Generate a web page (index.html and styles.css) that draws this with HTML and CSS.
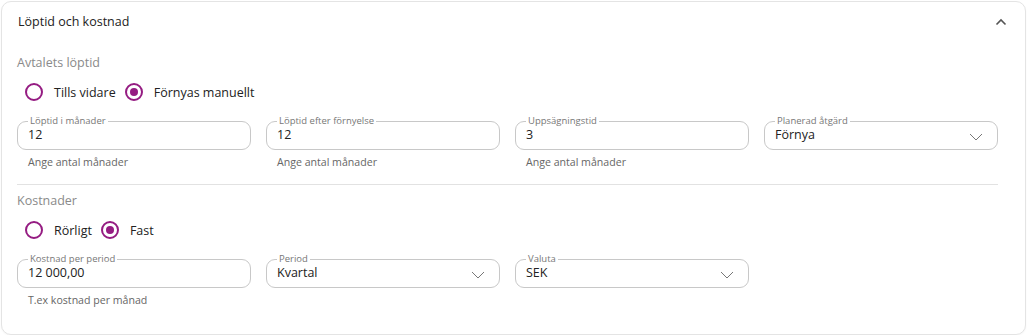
FILE: index.html
```html
<!DOCTYPE html>
<html lang="sv">
<head>
<meta charset="utf-8">
<title>Löptid och kostnad</title>
<link rel="stylesheet" href="styles.css">
</head>
<body>
<section class="card">
  <header class="card-header">
    <span class="card-title">Löptid och kostnad</span>
    <svg class="collapse-icon" width="12" height="8" viewBox="0 0 12 8"><path d="M1.5 6.5 L6 2 L10.5 6.5" fill="none" stroke="#555" stroke-width="1.6"/></svg>
  </header>
  <div class="card-body">
    <div class="group-title">Avtalets löptid</div>
    <div class="radio-row">
      <label class="radio"><span class="radio-dot"></span>Tills vidare</label>
      <label class="radio"><span class="radio-dot checked"></span>Förnyas manuellt</label>
    </div>
    <div class="field-grid">
      <div class="field">
        <fieldset class="outline"><legend>Löptid i månader</legend><div class="value">12</div></fieldset>
        <div class="helper">Ange antal månader</div>
      </div>
      <div class="field">
        <fieldset class="outline"><legend>Löptid efter förnyelse</legend><div class="value">12</div></fieldset>
        <div class="helper">Ange antal månader</div>
      </div>
      <div class="field">
        <fieldset class="outline"><legend>Uppsägningstid</legend><div class="value">3</div></fieldset>
        <div class="helper">Ange antal månader</div>
      </div>
      <div class="field">
        <fieldset class="outline select"><legend>Planerad åtgärd</legend><div class="value">Förnya</div>
          <svg class="chev" width="14" height="8" viewBox="0 0 14 8"><path d="M1 1 L7 7 L13 1" fill="none" stroke="#777" stroke-width="1"/></svg>
        </fieldset>
      </div>
    </div>
    <hr class="divider">
    <div class="group-title">Kostnader</div>
    <div class="radio-row">
      <label class="radio"><span class="radio-dot"></span>Rörligt</label>
      <label class="radio"><span class="radio-dot checked"></span>Fast</label>
    </div>
    <div class="field-grid">
      <div class="field">
        <fieldset class="outline"><legend>Kostnad per period</legend><div class="value">12 000,00</div></fieldset>
        <div class="helper">T.ex kostnad per månad</div>
      </div>
      <div class="field">
        <fieldset class="outline select"><legend>Period</legend><div class="value">Kvartal</div>
          <svg class="chev" width="14" height="8" viewBox="0 0 14 8"><path d="M1 1 L7 7 L13 1" fill="none" stroke="#777" stroke-width="1"/></svg>
        </fieldset>
      </div>
      <div class="field">
        <fieldset class="outline select"><legend>Valuta</legend><div class="value">SEK</div>
          <svg class="chev" width="14" height="8" viewBox="0 0 14 8"><path d="M1 1 L7 7 L13 1" fill="none" stroke="#777" stroke-width="1"/></svg>
        </fieldset>
      </div>
    </div>
  </div>
</section>
</body>
</html>
```

FILE: styles.css
```css
* { box-sizing: border-box; }
body {
  margin: 0;
  background: #ffffff;
  font-family: "Open Sans", "Noto Sans", sans-serif;
  color: #222;
}
.card {
  margin: 1px 0 0 1px;
  width: 1025px;
  height: 334px;
  border: 1px solid #e4e4e4;
  border-radius: 10px;
  background: #fff;
  box-shadow: 0 1px 2px rgba(0,0,0,0.04);
}
.card-header {
  height: 38px;
  padding: 0 18px 0 16px;
  display: flex;
  align-items: center;
  justify-content: space-between;
}
.card-title {
  font-size: 12.5px;
  color: #222;
}
.collapse-icon { margin-top: 2px; }
.card-body {
  padding: 14px 27px 0 15px;
}
.group-title {
  font-size: 12.5px;
  line-height: 18px;
  color: #8a8a8a;
}
.radio-row {
  display: flex;
  gap: 9px;
  margin-top: 8px;
  height: 24px;
  align-items: center;
  padding-left: 8px;
}
.radio {
  display: flex;
  align-items: center;
  gap: 11px;
  font-size: 12.5px;
  color: #222;
}
.radio-dot {
  width: 18px;
  height: 18px;
  border: 2px solid #951c82;
  border-radius: 50%;
  display: flex;
  align-items: center;
  justify-content: center;
}
.radio-dot.checked::after {
  content: "";
  width: 8px;
  height: 8px;
  border-radius: 50%;
  background: #951c82;
}
.field-grid {
  display: grid;
  grid-template-columns: repeat(4, 1fr);
  column-gap: 15px;
  margin-top: 11px;
}
.outline {
  position: relative;
  margin: 0;
  padding: 0 10px;
  border: 1px solid #c8c8c8;
  border-radius: 9px;
  height: 35px;
  min-width: 0;
}
.outline legend {
  font-size: 9.5px;
  line-height: 12px;
  color: #777;
  padding: 0 2px;
  margin-left: 0;
}
.value {
  font-size: 12.5px;
  line-height: 16px;
  margin-top: 0;
  color: #222;
}
.chev {
  position: absolute;
  right: 14px;
  top: 6px;
}
.helper {
  font-size: 10.6px;
  line-height: 16px;
  color: #666;
  margin-top: 4px;
  padding-left: 11px;
}
.divider {
  border: 0;
  border-top: 1px solid #e2e2e2;
  margin: 14px 0 7px;
}
```
